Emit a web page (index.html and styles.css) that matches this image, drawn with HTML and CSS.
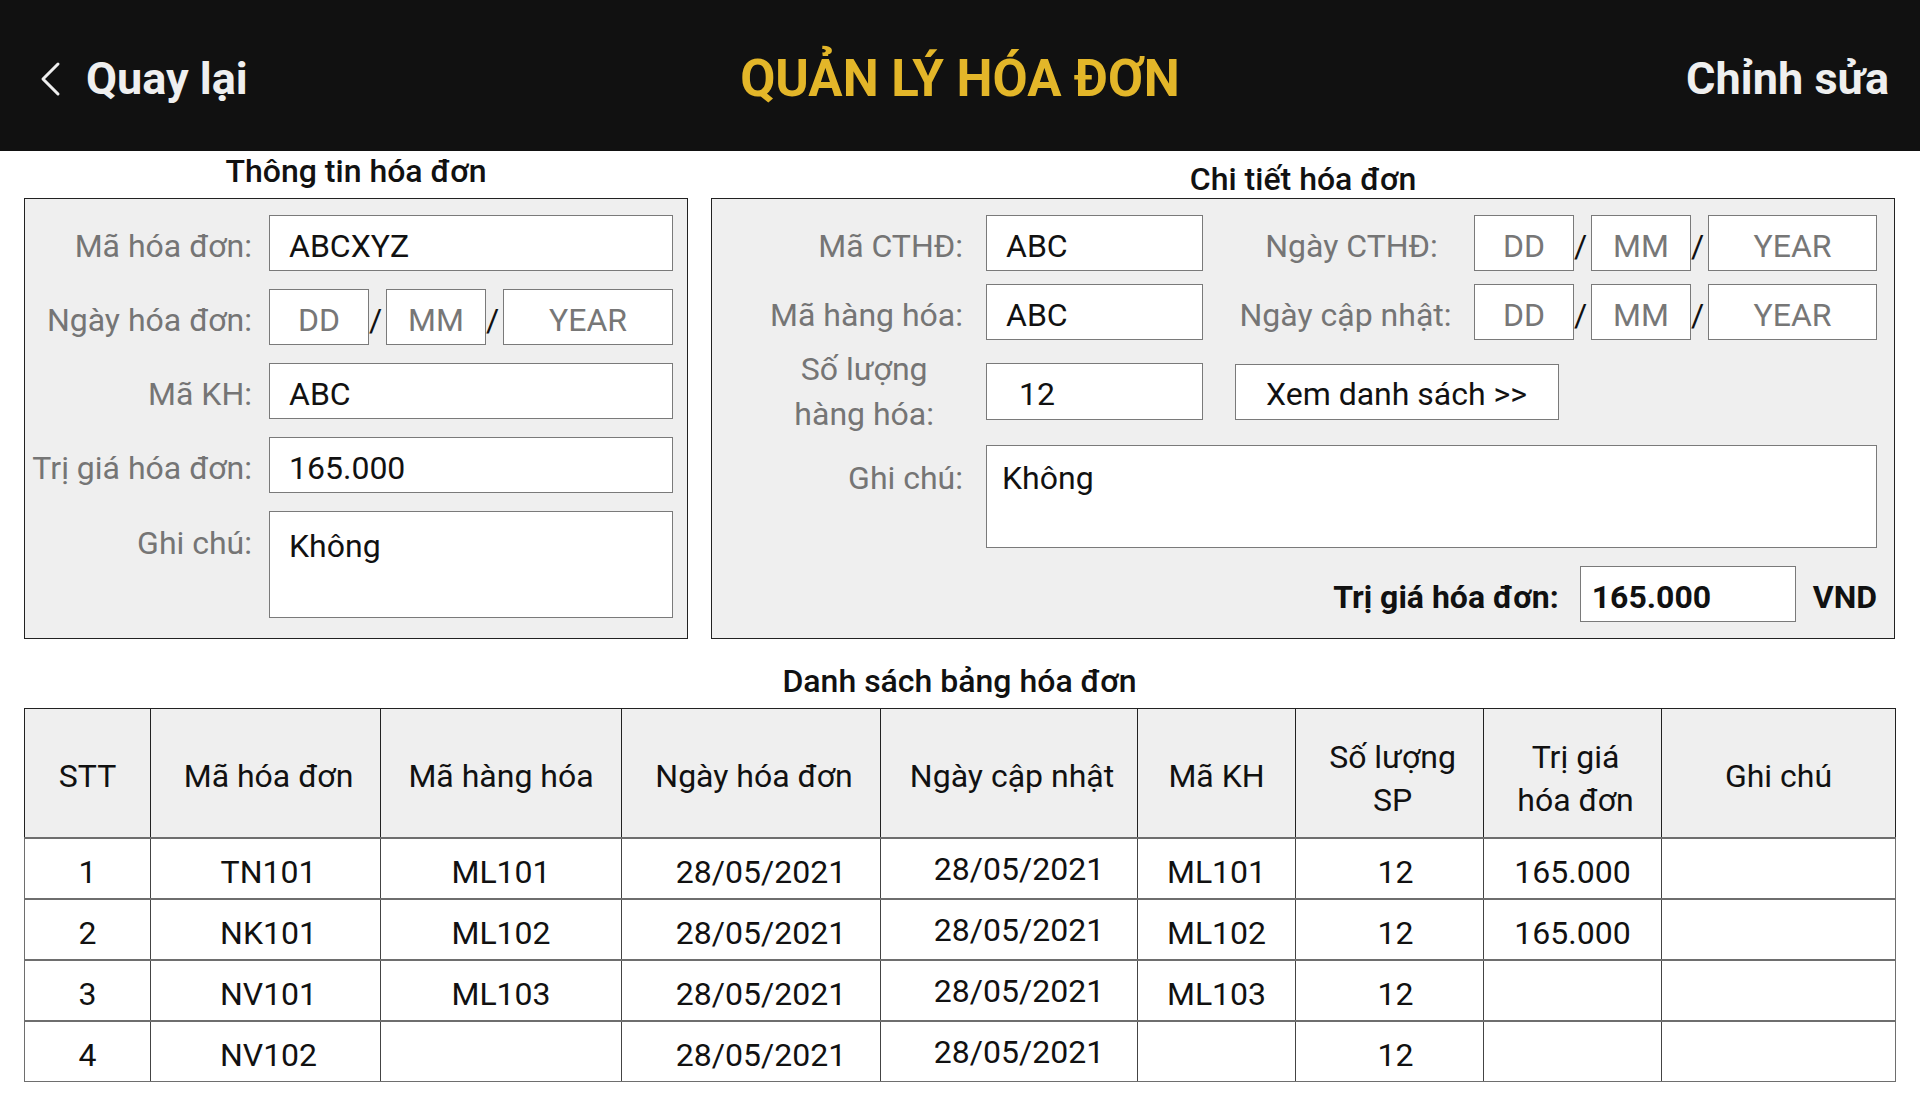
FILE: index.html
```html
<!DOCTYPE html>
<html lang="vi">
<head>
<meta charset="utf-8">
<title>Quản lý hóa đơn</title>
<link rel="stylesheet" href="styles.css">
</head>
<body>
<header class="topbar">
  <a class="back" href="#">
    <svg class="back-icon" viewBox="0 0 22 36" width="22" height="36" aria-hidden="true"><polyline points="18,3 3,18 18,33"/></svg>
    <span>Quay lại</span>
  </a>
  <h1 class="page-title">QUẢN LÝ HÓA ĐƠN</h1>
  <a class="edit" href="#">Chỉnh sửa</a>
</header>

<main class="content">
  <div class="panels">
    <section class="panel panel--info">
      <h2 class="panel-title">Thông tin hóa đơn</h2>
      <div class="box info-form">
        <label class="lbl">Mã hóa đơn:</label>
        <input class="field" value="ABCXYZ" readonly>

        <label class="lbl">Ngày hóa đơn:</label>
        <div class="date">
          <input class="field dd" placeholder="DD"><span class="sep">/</span><input class="field mm" placeholder="MM"><span class="sep">/</span><input class="field yy" placeholder="YEAR">
        </div>

        <label class="lbl">Mã KH:</label>
        <input class="field" value="ABC" readonly>

        <label class="lbl">Trị giá hóa đơn:</label>
        <input class="field" value="165.000" readonly>

        <label class="lbl lbl--top">Ghi chú:</label>
        <textarea class="field area area--info" readonly>Không</textarea>
      </div>
    </section>

    <section class="panel panel--detail">
      <h2 class="panel-title panel-title--low">Chi tiết hóa đơn</h2>
      <div class="box detail-form">
        <div class="drow">
          <label class="lbl dlbl">Mã CTHĐ:</label>
          <input class="field" value="ABC" readonly>
          <label class="lbl dlbl2 dlbl2--shift">Ngày CTHĐ:</label>
          <div class="date">
            <input class="field dd" placeholder="DD"><span class="sep">/</span><input class="field mm" placeholder="MM"><span class="sep">/</span><input class="field yy" placeholder="YEAR">
          </div>
        </div>

        <div class="drow drow--2">
          <label class="lbl dlbl">Mã hàng hóa:</label>
          <input class="field" value="ABC" readonly>
          <label class="lbl dlbl2">Ngày cập nhật:</label>
          <div class="date">
            <input class="field dd" placeholder="DD"><span class="sep">/</span><input class="field mm" placeholder="MM"><span class="sep">/</span><input class="field yy" placeholder="YEAR">
          </div>
        </div>

        <div class="drow drow--3">
          <label class="lbl dlbl dlbl--two"><span class="two-line">Số lượng<br>hàng hóa:</span></label>
          <input class="field field--qty" value="12" readonly>
          <button class="list-btn" type="button">Xem danh sách &gt;&gt;</button>
        </div>

        <div class="drow drow--4">
          <label class="lbl dlbl lbl--top2">Ghi chú:</label>
          <textarea class="field area area--detail" readonly>Không</textarea>
        </div>

        <div class="total-row">
          <label class="total-lbl">Trị giá hóa đơn:</label>
          <input class="field field--total" value="165.000" readonly>
          <span class="currency">VND</span>
        </div>
      </div>
    </section>
  </div>

  <section class="list">
    <h2 class="list-title">Danh sách bảng hóa đơn</h2>
    <table class="bills">
      <colgroup>
        <col class="c-stt"><col class="c-mahd"><col class="c-mahh"><col class="c-ngayhd"><col class="c-ngaycn"><col class="c-makh"><col class="c-sl"><col class="c-tg"><col class="c-gc">
      </colgroup>
      <thead>
        <tr>
          <th>STT</th>
          <th>Mã hóa đơn</th>
          <th>Mã hàng hóa</th>
          <th>Ngày hóa đơn</th>
          <th>Ngày cập nhật</th>
          <th>Mã KH</th>
          <th class="two">Số lượng<br>SP</th>
          <th class="two">Trị giá<br>hóa đơn</th>
          <th>Ghi chú</th>
        </tr>
      </thead>
      <tbody>
        <tr><td>1</td><td>TN101</td><td>ML101</td><td>28/05/2021</td><td>28/05/2021</td><td>ML101</td><td>12</td><td>165.000</td><td></td></tr>
        <tr><td>2</td><td>NK101</td><td>ML102</td><td>28/05/2021</td><td>28/05/2021</td><td>ML102</td><td>12</td><td>165.000</td><td></td></tr>
        <tr><td>3</td><td>NV101</td><td>ML103</td><td>28/05/2021</td><td>28/05/2021</td><td>ML103</td><td>12</td><td></td><td></td></tr>
        <tr><td>4</td><td>NV102</td><td></td><td>28/05/2021</td><td>28/05/2021</td><td></td><td>12</td><td></td><td></td></tr>
      </tbody>
    </table>
  </section>
</main>
</body>
</html>
```

FILE: styles.css
```css
* { box-sizing: border-box; }

html, body {
  margin: 0;
  padding: 0;
  background: #ffffff;
}

body {
  font-family: Roboto, "Noto Sans", "Liberation Sans", sans-serif;
  font-size: 32px;
  color: #111111;
}

/* ---------- top bar ---------- */
.topbar {
  height: 151px;
  background: #111111;
  display: grid;
  grid-template-columns: 1fr auto 1fr;
  align-items: center;
  padding: 6px 31px 0 31px;
}

.back {
  justify-self: start;
  display: flex;
  align-items: center;
  padding-left: 9px;
  color: #efefef;
  text-decoration: none;
  font-size: 45px;
  font-weight: 700;
}

.back-icon {
  margin-right: 24px;
  fill: none;
  stroke: #efefef;
  stroke-width: 3;
  stroke-linecap: round;
  stroke-linejoin: round;
}

.page-title {
  margin: 0;
  font-size: 51px;
  font-weight: 700;
  color: #e3b629;
}

.edit {
  justify-self: end;
  color: #efefef;
  text-decoration: none;
  font-size: 45px;
  font-weight: 700;
}

/* ---------- content ---------- */
.content {
  padding: 0 25px 0 24px;
}

.panels {
  display: flex;
  gap: 23px;
}

.panel--info { width: 664px; }
.panel--detail { flex: 1; }

.panel-title {
  margin: 0;
  height: 47px;
  padding-top: 2px;
  line-height: 36px;
  font-size: 32px;
  font-weight: 500;
  text-align: center;
  color: #111;
}

.panel-title--low { padding-top: 10px; }

.box {
  background: #efefef;
  border: 1px solid #222222;
  height: 441px;
}

.lbl {
  color: #757575;
  line-height: 36px;
  text-align: right;
  white-space: nowrap;
  padding-top: 5px;
}

.field {
  font: inherit;
  font-size: 32px;
  color: #111111;
  background: #ffffff;
  border: 1px solid #7a7a7a;
  border-radius: 0;
  height: 56px;
  padding: 5px 19px 0;
  margin: 0;
  outline: none;
  min-width: 0;
  width: 100%;
}

.field::placeholder {
  color: #777777;
  opacity: 1;
}

.area {
  resize: none;
  line-height: 36px;
  display: block;
}

/* left form */
.info-form {
  display: grid;
  grid-template-columns: 227px 404px;
  grid-template-rows: 56px 56px 56px 56px 107px;
  column-gap: 17px;
  row-gap: 18px;
  align-items: center;
  padding: 16px 14px 20px 0;
}

.lbl--top {
  align-self: start;
  margin-top: 12px;
  padding-top: 2px;
}

.area--info {
  height: 107px;
  padding: 16px 19px;
}

/* date group */
.date {
  display: flex;
  align-items: center;
}

.date .dd,
.date .mm {
  width: 100px;
  flex: none;
  padding: 5px 0 0;
  text-align: center;
}

.date .yy {
  flex: 1;
  padding: 5px 0 0;
  text-align: center;
}

.sep {
  width: 17px;
  flex: none;
  text-align: center;
  color: #111;
  line-height: 36px;
  padding: 5px 4px 0 0;
}

/* right form */
.detail-form {
  display: flex;
  flex-direction: column;
  padding: 16px 17px 16px 0;
}

.drow {
  display: grid;
  grid-template-columns: 274px 217px 271px 403px;
  grid-template-rows: minmax(0, 1fr);
  align-items: center;
  height: 56px;
}

.drow--2 { margin-top: 13px; }
.drow--3 { margin-top: 23px; height: 57px; }
.drow--4 { margin-top: 25px; height: 103px; }

.dlbl { padding-right: 23px; }

.dlbl2 {
  text-align: center;
  padding-left: 14px;
}

.dlbl2--shift { padding-left: 26px; }

.dlbl--two {
  padding-right: 52px;
  padding-top: 0;
}

.two-line {
  display: inline-block;
  text-align: center;
  line-height: 45px;
}

.field--qty {
  height: 57px;
  padding-left: 32px;
}

.list-btn {
  grid-column: 3 / 5;
  justify-self: start;
  margin-left: 32px;
  width: 324px;
  height: 56px;
  font: inherit;
  font-size: 32px;
  color: #111;
  background: #ffffff;
  border: 1px solid #7a7a7a;
  border-radius: 0;
  text-align: left;
  padding: 5px 0 0 30px;
}

.lbl--top2 {
  align-self: start;
  margin-top: 13px;
  padding-top: 2px;
}

.area--detail {
  grid-column: 2 / 5;
  height: 103px;
  padding: 14px 15px;
}

.total-row {
  margin-top: 18px;
  height: 56px;
  display: flex;
  justify-content: flex-end;
  align-items: center;
}

.total-lbl {
  font-weight: 700;
  color: #111;
  margin-right: 21px;
  padding-top: 5px;
}

.field--total {
  width: 216px;
  font-weight: 700;
  padding-left: 11px;
}

.currency {
  font-weight: 700;
  margin-left: 17px;
  padding-top: 5px;
}

/* ---------- table ---------- */
.list-title {
  margin: 24px 0 9px;
  line-height: 36px;
  font-size: 32px;
  font-weight: 500;
  text-align: center;
}

.bills {
  width: 1871px;
  border-collapse: collapse;
  table-layout: fixed;
  font-size: 32px;
  color: #111;
}

.c-stt { width: 126px; }
.c-mahd { width: 230px; }
.c-mahh { width: 241px; }
.c-ngayhd { width: 259px; }
.c-ngaycn { width: 257px; }
.c-makh { width: 158px; }
.c-sl { width: 188px; }
.c-tg { width: 178px; }
.c-gc { width: 234px; }

.bills th {
  height: 129px;
  background: #efefef;
  font-weight: 400;
  border: 1px solid #222222;
  border-bottom: 2px solid #6e6e6e;
  line-height: 43px;
  padding: 7px 0 0;
  vertical-align: middle;
}

.bills th:nth-child(2),
.bills th:nth-child(4),
.bills th:nth-child(5) { padding-left: 6px; }

.bills th.two { padding-top: 12px; padding-left: 6px; }

.bills td {
  height: 61px;
  padding: 7px 0 0;
  text-align: center;
  vertical-align: middle;
  border-left: 1px solid #444444;
  border-right: 1px solid #444444;
  border-bottom: 2px solid #6e6e6e;
  line-height: 36px;
}

.bills td:nth-child(2) { padding-left: 6px; }
.bills td:nth-child(4) { padding-left: 20px; }
.bills td:nth-child(5) { padding-left: 20px; padding-top: 2px; }
.bills td:nth-child(7) { padding-left: 12px; }

.bills tbody tr:last-child td {
  border-bottom: 1px solid #6e6e6e;
}

.bills td:first-child { border-left-color: #6e6e6e; }
.bills td:last-child { border-right-color: #6e6e6e; }
```
